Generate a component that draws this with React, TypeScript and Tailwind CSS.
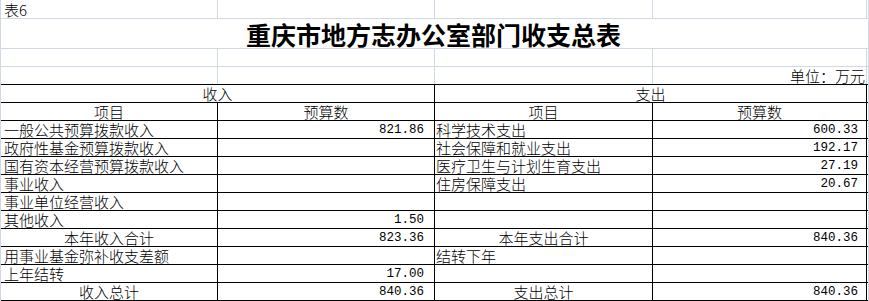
import React from "react";

type Row = {
  l: string;
  lv?: string;
  r?: string;
  rv?: string;
  lc?: boolean;
  rc?: boolean;
};

const rows: Row[] = [
  { l: "一般公共预算拨款收入", lv: "821.86", r: "科学技术支出", rv: "600.33" },
  { l: "政府性基金预算拨款收入", r: "社会保障和就业支出", rv: "192.17" },
  { l: "国有资本经营预算拨款收入", r: "医疗卫生与计划生育支出", rv: "27.19" },
  { l: "事业收入", r: "住房保障支出", rv: "20.67" },
  { l: "事业单位经营收入" },
  { l: "其他收入", lv: "1.50" },
  { l: "本年收入合计", lv: "823.36", r: "本年支出合计", rv: "840.36", lc: true, rc: true },
  { l: "用事业基金弥补收支差额", r: "结转下年" },
  { l: "上年结转", lv: "17.00" },
  { l: "收入总计", lv: "840.36", r: "支出总计", rv: "840.36", lc: true, rc: true },
];

const cjk = "[font-family:'Noto_Sans_CJK_SC','Noto_Sans',sans-serif] text-[15px] leading-[15px] pb-[1px] font-light";
const num = "[font-family:'Liberation_Mono',monospace] text-[12.5px] leading-[14px] pb-[1px]";
const grid = "grid grid-cols-[217px_217px_218px_214px]";

function GridRow({ children, h = "h-[18px]", black = false }: { children?: React.ReactNode; h?: string; black?: boolean }) {
  return (
    <div className={`${grid} ${h} border-b ${black ? "border-black" : "border-[#d0d7e5]"}`}>
      {children}
    </div>
  );
}

export default function App() {
  return (
    <div className="w-[869px] h-[301px] bg-white border-l border-r border-[#d0d7e5] text-black overflow-hidden">
      {/* row 1 */}
      <GridRow h="h-[19px]">
        <div className={`border-r border-[#d0d7e5] flex items-end pl-[3px] ${cjk}`}>表6</div>
        <div className="border-r border-[#d0d7e5]" />
        <div className="border-r border-[#d0d7e5]" />
        <div className="border-r border-[#d0d7e5]" />
      </GridRow>
      {/* title */}
      <div className="h-[30px] border-b border-[#d0d7e5] flex items-center justify-center pr-[2px] [font-family:'Noto_Sans_CJK_SC',sans-serif] text-[25px] font-bold leading-[28px]">
        重庆市地方志办公室部门收支总表
      </div>
      <GridRow>
        <div className="border-r border-[#d0d7e5]" />
        <div className="border-r border-[#d0d7e5]" />
        <div className="border-r border-[#d0d7e5]" />
        <div className="border-r border-[#d0d7e5]" />
      </GridRow>
      <GridRow black>
        <div className="border-r border-[#d0d7e5]" />
        <div className="border-r border-[#d0d7e5]" />
        <div className="border-r border-[#d0d7e5]" />
        <div className={`border-r border-[#d0d7e5] flex items-end justify-end pr-[1px] ${cjk}`}>单位：万元</div>
      </GridRow>
      {/* 收入 / 支出 */}
      <div className="grid grid-cols-[434px_432px] h-[18px] border-b border-black">
        <div className={`border-r border-black flex items-end justify-center ${cjk}`}>收入</div>
        <div className={`border-r border-black flex items-end justify-center ${cjk}`}>支出</div>
      </div>
      <GridRow black>
        <div className={`border-r border-black flex items-end justify-center ${cjk}`}>项目</div>
        <div className={`border-r border-black flex items-end justify-center ${cjk}`}>预算数</div>
        <div className={`border-r border-black flex items-end justify-center ${cjk}`}>项目</div>
        <div className={`border-r border-black flex items-end justify-center ${cjk}`}>预算数</div>
      </GridRow>
      {rows.map((r, i) => (
        <GridRow key={i} black>
          <div className={`border-r border-black flex items-end whitespace-nowrap ${r.lc ? "justify-center" : "pl-[3px]"} ${cjk}`}>{r.l}</div>
          <div className={`border-r border-black flex items-end justify-end pr-[10px] ${num}`}>{r.lv ?? ""}</div>
          <div className={`border-r border-black flex items-end whitespace-nowrap ${r.rc ? "justify-center" : "pl-[1px]"} ${cjk}`}>{r.r ?? ""}</div>
          <div className={`border-r border-black flex items-end justify-end pr-[8px] ${num}`}>{r.rv ?? ""}</div>
        </GridRow>
      ))}
    </div>
  );
}
